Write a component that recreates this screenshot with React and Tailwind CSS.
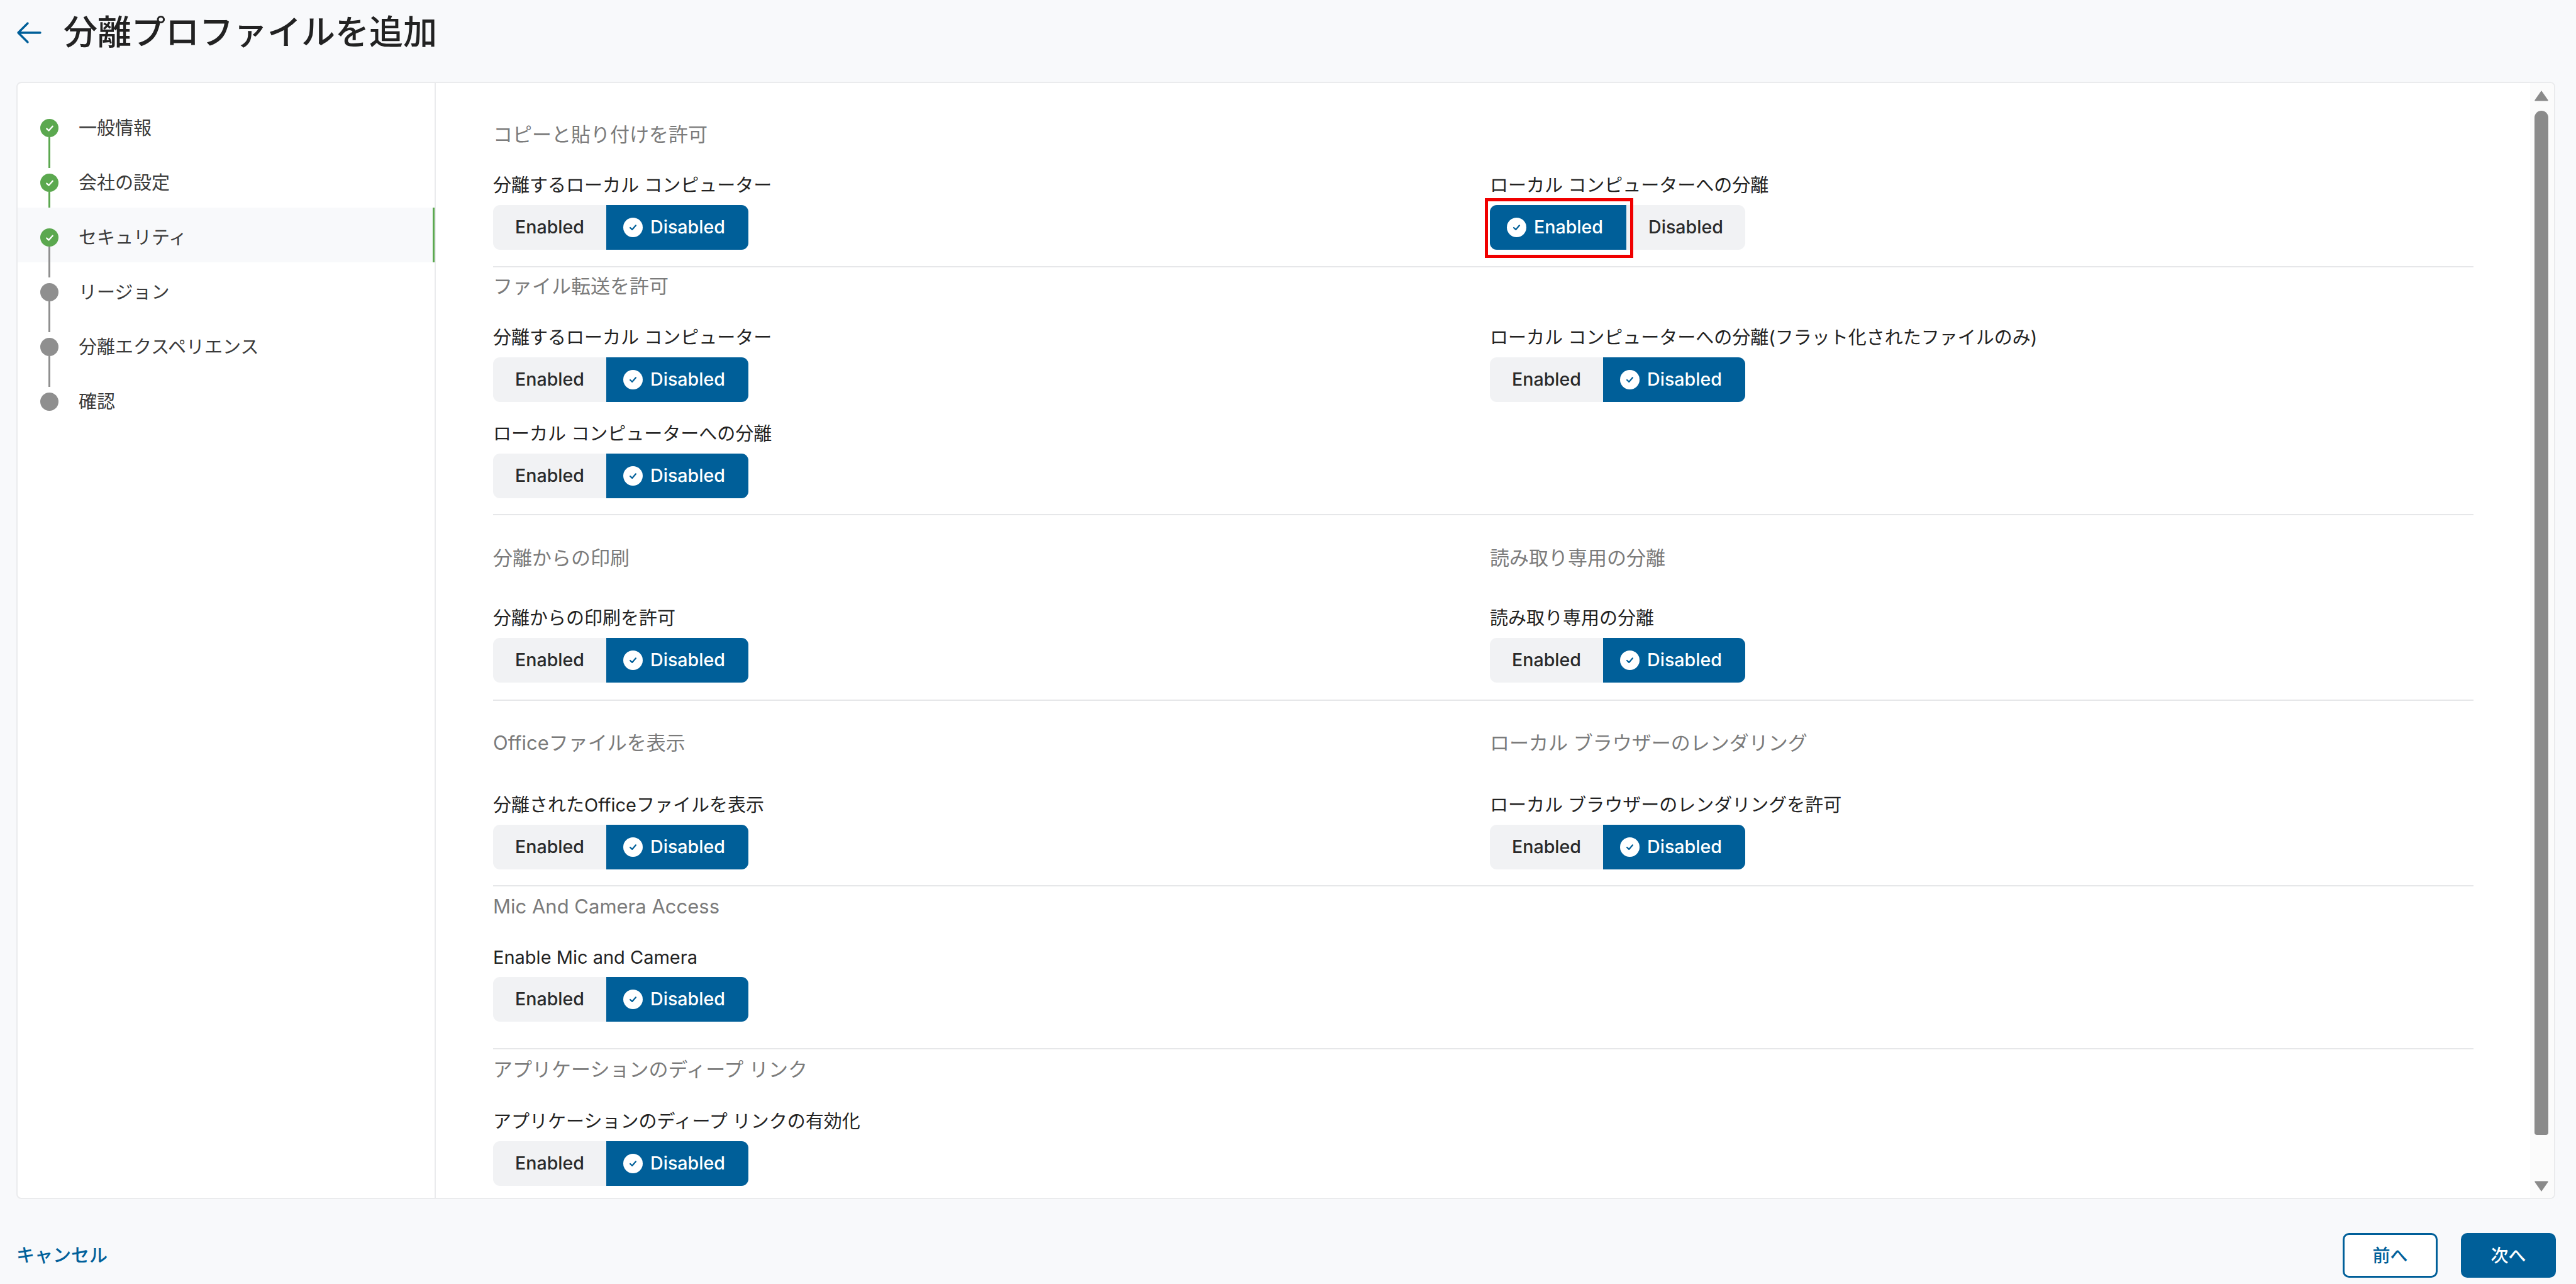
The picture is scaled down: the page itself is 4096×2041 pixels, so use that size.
import React from "react";

const FONT = { fontFamily: 'Inter, "Noto Sans CJK JP", sans-serif' };

function MiniCheck({ color, className }) {
  return (
    <svg viewBox="0 0 16 16" className={className} fill="none" stroke={color} strokeWidth="1.7" strokeLinecap="round" strokeLinejoin="round">
      <path d="M4.6 8.4 7 10.6 11.4 5.6" />
    </svg>
  );
}

function Toggle({ enabled }) {
  const on = "flex items-center pl-[27px] pr-[37px] bg-[#005f99] text-white";
  const off = "flex items-center px-[35px] text-[#2a2a2a]";
  const Dot = () => (
    <span className="w-[31px] h-[31px] rounded-full bg-white flex items-center justify-center mr-[12px]">
      <MiniCheck color="#005f99" className="w-[21px] h-[21px]" />
    </span>
  );
  return (
    <div className="inline-flex h-[71px] rounded-[11px] bg-[#f1f2f4] overflow-hidden text-[28.6px] font-medium">
      <div className={enabled ? on : off}>
        {enabled && <Dot />}
        Enabled
      </div>
      <div className={!enabled ? on : off}>
        {!enabled && <Dot />}
        Disabled
      </div>
    </div>
  );
}

function Field({ label, enabled, marked }) {
  return (
    <div className="flex flex-col">
      <div className="h-[40px] mb-[11px] flex items-center text-[29px] leading-[40px] font-normal text-[#222] whitespace-nowrap">{label}</div>
      <div className="relative self-start">
        <Toggle enabled={enabled} />
        {marked && <div className="absolute left-[-8px] top-[-11px] w-[236px] h-[95px] border-[5px] border-[#f00000]" />}
      </div>
    </div>
  );
}

function Title({ children }) {
  return <div className="h-[40px] flex items-center text-[31px] leading-[40px] text-[#7b7b7b] whitespace-nowrap">{children}</div>;
}

const steps = [
  ["一般情報", true],
  ["会社の設定", true],
  ["セキュリティ", true],
  ["リージョン", false],
  ["分離エクスペリエンス", false],
  ["確認", false],
];

function Step({ label, done, index, last }) {
  const active = index === 2;
  const lineGreen = index < 2;
  return (
    <div className={"relative h-[87px] pt-[8px] pl-[36px] flex items-center " + (active ? "bg-[#f8f9fb]" : "")}>
      <div className="relative w-[29px] h-[29px] mr-[32px] shrink-0">
        <div className={"w-[29px] h-[29px] rounded-full flex items-center justify-center " + (done ? "bg-[#5ba84f]" : "bg-[#8f8f8f]")}>
          {done && <MiniCheck color="#ffffff" className="w-[22px] h-[22px]" />}
        </div>
        {!last && <div className={"absolute left-[13px] top-[29px] w-[3px] h-[49px] " + (lineGreen ? "bg-[#5ba84f]" : "bg-[#8f8f8f]")} />}
      </div>
      <span className="text-[29px] text-[#3a3a3a] whitespace-nowrap">{label}</span>
      {active && <div className="absolute right-0 top-0 w-[3px] h-full bg-[#5ba84f]" />}
    </div>
  );
}

export default function App() {
  return (
    <div className="h-screen w-full bg-[#f8f9fb] flex flex-col overflow-hidden" style={FONT}>
      <header className="h-[130px] shrink-0 pl-[26px] pb-[26px] flex items-center">
        <svg viewBox="0 0 40 36" className="w-[40px] h-[36px] mr-[35px]" fill="none" stroke="#005f99" strokeWidth="3.4" strokeLinecap="round" strokeLinejoin="round">
          <path d="M38 18H3M18 3 3 18l15 15" />
        </svg>
        <h1 className="text-[54px] leading-[70px] font-medium text-[#222] whitespace-nowrap">分離プロファイルを追加</h1>
      </header>

      <div className="h-[1776px] shrink-0 ml-[26px] mr-[33px] bg-white rounded-[8px] border-2 border-[#eaebed] flex overflow-hidden">
        <aside className="w-[665px] shrink-0 border-r-2 border-[#eaebed] pt-[24px]">
          {steps.map(([label, done], i) => (
            <Step key={label} label={label} done={done} index={i} last={i === steps.length - 1} />
          ))}
        </aside>

        <main className="flex-1 pl-[91px] pr-[90px] pt-[62px]">
          <section className="border-b-2 border-[#e6e7e9] pb-[26px]">
            <Title>コピーと貼り付けを許可</Title>
            <div className="grid grid-cols-[1585px_1fr] mt-[41px]">
              <Field label="分離するローカル コンピューター" />
              <Field label="ローカル コンピューターへの分離" enabled marked />
            </div>
          </section>

          <section className="border-b-2 border-[#e6e7e9] pt-[10px] pb-[25px]">
            <Title>ファイル転送を許可</Title>
            <div className="grid grid-cols-[1585px_1fr] mt-[42px]">
              <Field label="分離するローカル コンピューター" />
              <Field label="ローカル コンピューターへの分離(フラット化されたファイルのみ)" />
            </div>
            <div className="mt-[31px]">
              <Field label="ローカル コンピューターへの分離" />
            </div>
          </section>

          <section className="border-b-2 border-[#e6e7e9] pt-[48px] pb-[27px]">
            <div className="grid grid-cols-[1585px_1fr]">
              <Title>分離からの印刷</Title>
              <Title>読み取り専用の分離</Title>
            </div>
            <div className="grid grid-cols-[1585px_1fr] mt-[56px]">
              <Field label="分離からの印刷を許可" />
              <Field label="読み取り専用の分離" />
            </div>
          </section>

          <section className="border-b-2 border-[#e6e7e9] pt-[47px] pb-[25px]">
            <div className="grid grid-cols-[1585px_1fr]">
              <Title>Officeファイルを表示</Title>
              <Title>ローカル ブラウザーのレンダリング</Title>
            </div>
            <div className="grid grid-cols-[1585px_1fr] mt-[59px]">
              <Field label="分離されたOfficeファイルを表示" />
              <Field label="ローカル ブラウザーのレンダリングを許可" />
            </div>
          </section>

          <section className="border-b-2 border-[#e6e7e9] pt-[12px] pb-[42px]">
            <Title>Mic And Camera Access</Title>
            <div className="mt-[41px]">
              <Field label="Enable Mic and Camera" />
            </div>
          </section>

          <section className="pt-[12px]">
            <Title>アプリケーションのディープ リンク</Title>
            <div className="mt-[43px]">
              <Field label="アプリケーションのディープ リンクの有効化" />
            </div>
          </section>
        </main>

        <div className="w-[38px] shrink-0 bg-[#fbfbfb] pl-[7px] pt-[11px] pb-[9px] flex flex-col">
          <svg viewBox="0 0 22 18" className="w-[22px] h-[18px] shrink-0" fill="#8a8a8a"><path d="M11 1 21.5 16a1 1 0 0 1-.8 1.5H1.3A1 1 0 0 1 .5 16Z" /></svg>
          <div className="w-[22px] flex-1 mt-[15px] mb-[73px] rounded-t-[11px] rounded-b-[4px] bg-[#8a8a8a]" />
          <svg viewBox="0 0 22 18" className="w-[22px] h-[18px] shrink-0" fill="#8a8a8a"><path d="M11 17 .5 2a1 1 0 0 1 .8-1.5h19.4a1 1 0 0 1 .8 1.5Z" /></svg>
        </div>
      </div>

      <footer className="flex-1 pl-[26px] pr-[32px] pt-[54px]">
        <div className="flex items-center justify-between">
          <span className="text-[29px] font-medium text-[#00609a]">キャンセル</span>
          <div className="flex gap-[37px]">
            <button className="w-[151px] h-[71px] rounded-[10px] border-[3px] border-[#005f99] bg-white text-[28px] font-medium text-[#00609a]">前へ</button>
            <button className="w-[151px] h-[71px] rounded-[10px] bg-[#005f99] text-[28px] font-medium text-white">次へ</button>
          </div>
        </div>
      </footer>
    </div>
  );
}
